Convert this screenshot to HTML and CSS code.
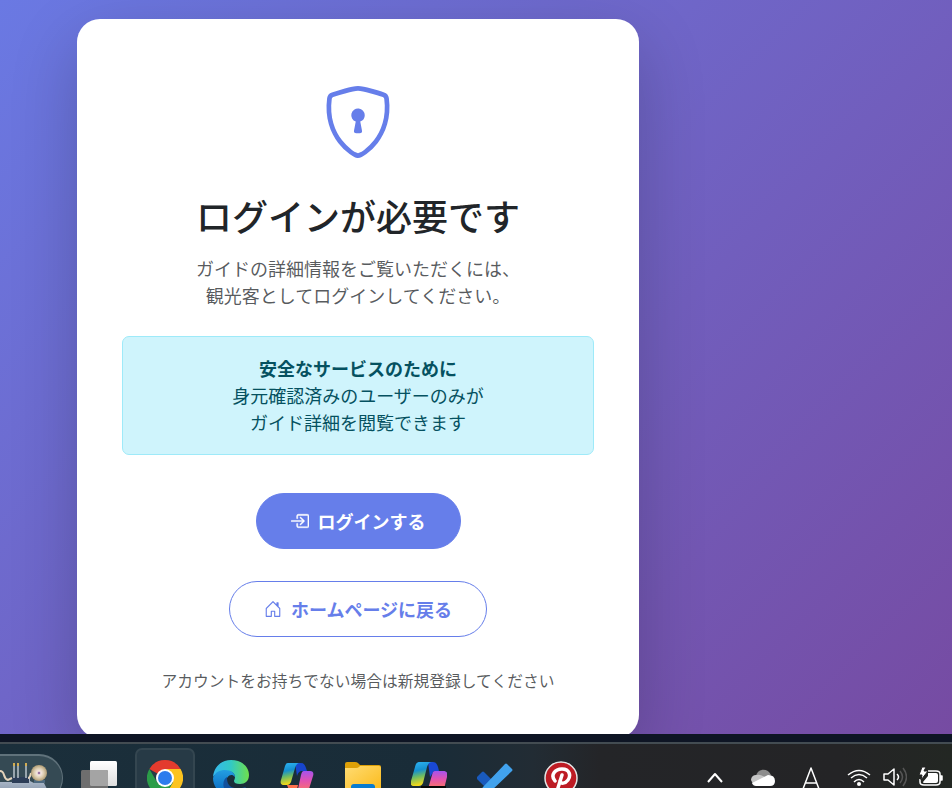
FILE: index.html
```html
<!DOCTYPE html>
<html lang="ja">
<head>
<meta charset="utf-8">
<meta name="viewport" content="width=device-width, initial-scale=1">
<title>ログインが必要です</title>
<link rel="stylesheet" href="styles.css">
</head>
<body>
<main class="stage">
  <section class="card">
    <svg class="shield" viewBox="0 0 16 16" fill="currentColor" aria-hidden="true">
      <path d="M5.338 1.59a61 61 0 0 0-2.837.856.48.48 0 0 0-.328.39c-.554 4.157.726 7.19 2.253 9.188a10.7 10.7 0 0 0 2.287 2.233c.346.244.652.42.893.533q.18.085.293.118a1 1 0 0 0 .101.025 1 1 0 0 0 .1-.025q.114-.034.294-.118c.24-.113.547-.29.893-.533a10.7 10.7 0 0 0 2.287-2.233c1.527-1.997 2.807-5.031 2.253-9.188a.48.48 0 0 0-.328-.39c-.651-.213-1.75-.56-2.837-.855C9.552 1.29 8.531 1.067 8 1.067c-.53 0-1.552.223-2.662.524zM5.072.56C6.157.265 7.31 0 8 0s1.843.265 2.928.56c1.11.3 2.229.655 2.887.87a1.54 1.54 0 0 1 1.044 1.262c.596 4.477-.787 7.795-2.465 9.99a11.8 11.8 0 0 1-2.517 2.453 7 7 0 0 1-1.048.625c-.28.132-.581.24-.829.24s-.548-.108-.829-.24a7 7 0 0 1-1.048-.625 11.8 11.8 0 0 1-2.517-2.453C1.928 10.487.545 7.169 1.141 2.692A1.54 1.54 0 0 1 2.185 1.43 63 63 0 0 1 5.072.56"/>
      <path d="M9.5 6.5a1.5 1.5 0 0 1-1 1.415l.385 1.99a.5.5 0 0 1-.491.595h-.788a.5.5 0 0 1-.49-.595l.384-1.99a1.5 1.5 0 1 1 2-1.415"/>
    </svg>
    <h1 class="title">ログインが必要です</h1>
    <p class="lead">ガイドの詳細情報をご覧いただくには、<br>観光客としてログインしてください。</p>
    <div class="notice"><strong>安全なサービスのために</strong><br>身元確認済みのユーザーのみが<br>ガイド詳細を閲覧できます</div>
    <div class="actions">
      <button class="btn btn-primary" type="button">
        <svg class="btn-icon" viewBox="0 0 16 16" fill="currentColor" aria-hidden="true">
          <path fill-rule="evenodd" d="M6 3.5a.5.5 0 0 1 .5-.5h8a.5.5 0 0 1 .5.5v9a.5.5 0 0 1-.5.5h-8a.5.5 0 0 1-.5-.5v-2a.5.5 0 0 0-1 0v2A1.5 1.5 0 0 0 6.5 14h8a1.5 1.5 0 0 0 1.5-1.5v-9A1.5 1.5 0 0 0 14.5 2h-8A1.5 1.5 0 0 0 5 3.5v2a.5.5 0 0 0 1 0z"/>
          <path fill-rule="evenodd" d="M11.854 8.354a.5.5 0 0 0 0-.708l-3-3a.5.5 0 1 0-.708.708L10.293 7.5H.5a.5.5 0 0 0 0 1h9.793l-2.147 2.146a.5.5 0 0 0 .708.708z"/>
        </svg>ログインする
      </button>
      <a class="btn btn-outline" href="#home">
        <svg class="btn-icon" viewBox="0 0 16 16" fill="currentColor" aria-hidden="true">
          <path d="M8.354 1.146a.5.5 0 0 0-.708 0l-6 6A.5.5 0 0 0 1.5 7.5v7a.5.5 0 0 0 .5.5h4.5a.5.5 0 0 0 .5-.5v-4h2v4a.5.5 0 0 0 .5.5H14a.5.5 0 0 0 .5-.5v-7a.5.5 0 0 0-.146-.354L13 5.793V2.5a.5.5 0 0 0-.5-.5h-1a.5.5 0 0 0-.5.5v1.293zM2.5 14V7.707l5.5-5.5 5.5 5.5V14H10v-4a.5.5 0 0 0-.5-.5h-3a.5.5 0 0 0-.5.5v4z"/>
        </svg>ホームページに戻る
      </a>
    </div>
    <p class="signup">アカウントをお持ちでない場合は新規登録してください</p>
  </section>
</main>

<footer class="taskbar">
  <button class="search" type="button" aria-label="検索">
    <svg viewBox="0 0 63 48" aria-hidden="true">
      <defs>
        <linearGradient id="body" x2="0" y2="1"><stop stop-color="#b4c0d0"/><stop offset="1" stop-color="#66788f"/></linearGradient>
        <radialGradient id="dish"><stop stop-color="#c8a8c8"/><stop offset=".3" stop-color="#f0e4da"/><stop offset=".6" stop-color="#dccdb0"/><stop offset="1" stop-color="#b09c74"/></radialGradient>
      </defs>
      <path d="M0 26h12v-4h18v3l4 2h10l5 10v11H0z" fill="url(#body)"/>
      <path d="M12 21h17v6H12z" fill="#2c3d57"/>
      <path d="M34 24h11v3H34z" fill="#4e6a80"/>
      <path d="M14 8v14M18 8v14M26 8v14" stroke="#bac4cb" stroke-width="1.5"/>
      <path d="M13 7h2v3h-2zM17 7h2v3h-2zM25 7h2v3h-2z" fill="#d3ad52"/>
      <path d="M0 15q3 0 4 4t4 5l4-2M28 22q2 0 3-5" fill="none" stroke="#e4d3ba" stroke-width="2"/>
      <circle cx="39" cy="17" r="8" fill="url(#dish)"/>
      <circle cx="39" cy="17" r="1" fill="#8a5f94"/>
    </svg>
  </button>
  <nav class="apps" aria-label="アプリ">
    <button class="app" type="button" aria-label="タスク ビュー">
      <svg viewBox="0 0 36 36"><defs><linearGradient id="tv" x2="0" y2="1"><stop stop-color="#fff"/><stop offset="1" stop-color="#dedede"/></linearGradient></defs>
        <rect x="9" y="1" width="27" height="25" rx="1.5" fill="url(#tv)"/><rect y="10" width="27" height="24" rx="1.5" fill="#6e6e6e"/><path d="M9 10h16.5a1.5 1.5 0 0 1 1.5 1.5V26H10.5a1.5 1.5 0 0 1-1.5-1.5z" fill="#a4a4a4"/></svg>
    </button>
    <button class="app app-active" type="button" aria-label="Chrome">
      <svg viewBox="0 0 36 36"><path d="M18 18 2.41 9A18 18 0 0 1 33.59 9z" fill="#e33b2e"/><path d="M18 9h15.59A18 18 0 0 1 18 36l7.79-13.5z" fill="#fcc31e"/><path d="M10.21 22.5 2.41 9A18 18 0 0 0 18 36l7.79-13.5z" fill="#2b9c48"/><circle cx="18" cy="18" r="9" fill="#fff"/><circle cx="18" cy="18" r="7" fill="#2d7ced"/></svg>
    </button>
    <button class="app" type="button" aria-label="Edge">
      <svg viewBox="0 0 36 36"><defs><linearGradient id="eg"><stop stop-color="#35b8ee"/><stop offset=".5" stop-color="#32c9c4"/><stop offset="1" stop-color="#6fe04b"/></linearGradient><linearGradient id="eb" x2="0" y2="1"><stop stop-color="#239ee2"/><stop offset="1" stop-color="#0865bd"/></linearGradient></defs>
        <path d="M0 17C1 6 9 0 18 0c11 0 18 7 18 15 0 6-4 9-9 9-4 0-6-1-6-3 0-1 1-2 1-4 0-4-4-6-8-6-6 0-11 2-14 6z" fill="url(#eg)"/><path d="M0 18C2 12 7 10 12 10c6 0 10 3 10 7-4-5-9 0-9 5 0 6 6 9 13 7-3 4-5 5-8 5C8 36 0 28 0 18z" fill="url(#eb)"/><path d="M14 17c-5 3-5 12 1 16 6 3 14 0 18-6-6 2-14 2-17-2-2-3-2-5-2-8z" fill="#12519d"/></svg>
    </button>
    <button class="app" type="button" aria-label="Copilot">
      <svg viewBox="0 0 36 36"><defs><linearGradient id="ca" x2=".2" y2="1"><stop stop-color="#2fb5f5"/><stop offset=".4" stop-color="#1590cf"/><stop offset=".65" stop-color="#6dbb64"/><stop offset="1" stop-color="#f4d918"/></linearGradient><linearGradient id="cb" x2="0" y2="1"><stop stop-color="#a553ee"/><stop offset=".45" stop-color="#e252b0"/><stop offset="1" stop-color="#ff795d"/></linearGradient></defs>
        <path d="M16 3h6c3 0 4 2 5 5l1 3h-4c-4 0-5 2-6 5z" fill="#1745cd"/><path d="M9 3h12c-3 0-4 2-5 5l-4 14c-1 2-2 3-4 3H5c-3 0-4-2-3-5L6 6c1-2 1-3 3-3z" fill="url(#ca)"/><path d="M25 11h6c3 0 4 2 3 5l-4 13c-1 3-3 4-5 4H14c3 0 4-1 5-4l3-14c1-3 1-4 3-4z" fill="url(#cb)"/><path d="M8 25h11l-2 8h-3c-3 0-4-3-6-8z" fill="#ff704c"/></svg>
    </button>
    <button class="app" type="button" aria-label="エクスプローラー">
      <svg viewBox="0 0 36 36"><defs><linearGradient id="fd" x2="1" y2="1"><stop stop-color="#ffdc73"/><stop offset="1" stop-color="#fbb917"/></linearGradient></defs>
        <path d="M0 4q0-2 2-2h8q2 0 3 1l2 2h19q2 0 2 2v4H0z" fill="#dda007"/><path d="M0 8h11q2 0 3-1l1-1h19q2 0 2 2v24H0z" fill="url(#fd)"/><path d="M6 36V27q0-3 3-3h18q3 0 3 3v9z" fill="#087bd0"/></svg>
    </button>
    <button class="app" type="button" aria-label="Microsoft 365">
      <svg viewBox="0 0 36 36"><path d="M17 2h5c3 0 4 2 5 5l1 4h-5l-4 6z" fill="#1948d4"/><path d="M9 2h12c-3 0-4 2-5 5l-4 16c-1 2-2 3-4 3H3c-3 0-4-2-3-5L4 7c1-4 2-5 5-5z" fill="url(#ca)"/><path d="M24 11h8c4 0 5 2 4 6l-3 12H17l4-14c1-3 1-4 3-4z" fill="url(#cb)"/><rect x="10" y="26" width="25" height="10" fill="#080808"/><text class="m-label" x="12" y="34">M365</text></svg>
    </button>
    <button class="app" type="button" aria-label="To Do">
      <svg viewBox="0 0 36 36"><path d="m0 17 5-5q1-1 2 0l11 11-7 7L0 19q-1-1 0-2z" fill="#195abd"/><path d="M28 4q1-1 2 0l5 5q1 1 0 2L12 33q-1 1-2 0l-4-4q-1-1 0-2z" fill="#41a2ed"/></svg>
    </button>
    <button class="app" type="button" aria-label="Pinterest">
      <svg viewBox="0 0 36 36"><circle cx="18" cy="18" r="16" fill="#bd1c24" stroke="#e5e5e5" stroke-width="1.5"/><path d="m14 31 5-16M12 21c-5-6 0-12 7-12 8 0 9 7 6 11-3 4-7 4-8 1" fill="none" stroke="#fff" stroke-width="3.5" stroke-linecap="round"/></svg>
    </button>
  </nav>
  <div class="tray">
    <button class="status wide" type="button" aria-label="隠れているインジケーター"><svg viewBox="0 0 24 24"><path d="m5 16 7-8 7 8"/></svg></button>
    <button class="status wide" type="button" aria-label="OneDrive"><svg viewBox="0 0 24 24"><g stroke="none"><path d="M5 10C7 2 17 2 20 9l-7 6z" fill="#8d8d8d"/><path d="M0 14a5 5 0 0 1 6-5q5-1 12 5L2 18z" fill="#c5c5c5"/><path d="M1 17 17 9q7 0 7 6 0 5-5 5H5q-3 0-4-3z" fill="#fff"/></g></svg></button>
    <button class="status wide" type="button" aria-label="入力モード"><svg viewBox="0 0 24 24"><path d="M4 23 12 2l8 21M6 17h12" stroke-width="1.5"/></svg></button>
    <button class="status first" type="button" aria-label="Wi-Fi"><svg viewBox="0 0 24 24"><path d="M1 9q11-9 22 0M4 12q8-7 16 0M7 16q5-5 10 0" stroke-width="1.5"/><circle cx="12" cy="18" r="2" fill="#fff" stroke="none"/></svg></button>
    <button class="status" type="button" aria-label="音量"><svg viewBox="0 0 24 24"><g stroke-width="1.5"><path d="M1 8h4l6-5v16l-6-5H1zM14 8q3 3 0 6"/><path d="M17 5q5 6 0 12M20 2q7 9 0 18" stroke="#555"/></g></svg></button>
    <button class="status" type="button" aria-label="バッテリー"><svg viewBox="0 0 24 24"><path d="M9 5h8q4 0 4 3v8q0 3-4 3H5q-4 0-4-3v-3M22 10v4h1v-4z" stroke-width="1.5"/><path d="M9 7h8q2 0 2 2v6q0 2-2 2H5q-1 0-1-1l5-6z" fill="#fff" stroke="none"/><path d="M3 1 0 9h3l-1 5 7-9H5l2-4z" fill="#fff" stroke="#222" stroke-width="1"/></svg></button>
  </div>
</footer>
</body>
</html>
```

FILE: styles.css
```css
* { box-sizing: border-box; }

html { font-size: 18px; }

body {
  margin: 0;
  height: 100vh;
  display: flex;
  flex-direction: column;
  overflow: hidden;
  font-family: "Noto Sans CJK JP", sans-serif;
  line-height: 1.5;
  color: #212529;
}

button { font: inherit; }
svg { display: block; }

.stage {
  flex: 1;
  min-height: 0;
  overflow: hidden;
  padding: 19px 313px 0 77px;
  background: linear-gradient(135deg, #6a79e3 0%, #764ba2 100%);
}

.card {
  padding: 67px 45px 45px;
  border-radius: 23px;
  background: #fff;
  box-shadow: 0 23px 68px rgba(0, 0, 0, 0.2);
  text-align: center;
}

.shield {
  width: 72px;
  height: 72px;
  margin: 0 auto 35px;
  color: #667eea;
}

.title {
  margin: 0 0 18px;
  font-size: 36px;
  font-weight: 500;
  line-height: 44px;
}

.lead {
  margin: 0 0 27px;
  color: rgba(33, 37, 41, 0.75);
}

.notice {
  margin-bottom: 38px;
  padding: 18px;
  border: 1px solid #9eeaf9;
  border-radius: 7px;
  background: #cff4fc;
  color: #055160;
}

.actions {
  display: flex;
  flex-direction: column;
  align-items: center;
  gap: 32px;
}

.btn {
  display: flex;
  align-items: center;
  gap: 9px;
  padding: 13px 34px;
  border: 1px solid #667eea;
  border-radius: 56px;
  font-weight: 700;
  line-height: 28px;
  text-decoration: none;
}

.btn-icon { width: 18px; height: 18px; }
.btn-primary { background: #667eea; color: #fff; }
.btn-primary .btn-icon { stroke: currentColor; stroke-width: 0.4; }
.btn-outline { background: #fff; color: #667eea; }

.signup {
  margin: 32px 0 0;
  font-size: 0.875rem;
  color: rgba(33, 37, 41, 0.75);
}

.taskbar {
  flex: none;
  height: 54px;
  display: flex;
  align-items: flex-start;
  overflow: hidden;
  border-top: 8px solid #0e1524;
  background: linear-gradient(90deg, #1b2f3b 0%, #192c38 45%, #222c34 56%, #242528 63%, #242426 88%, #232723 100%);
  box-shadow: inset 0 2px #434c52;
}

.taskbar button {
  padding: 0;
  border: 0;
  background: none;
}

.taskbar .search {
  width: 63px;
  height: 48px;
  margin: 12px 3px 0 0;
  overflow: hidden;
  border: 1px solid #60727b;
  border-left: 0;
  border-top-width: 2px;
  border-radius: 0 24px 24px 0;
  background: #354a54;
}

.search svg { width: 63px; height: 48px; }

.apps, .tray { display: flex; padding-top: 6px; }

.app {
  width: 60px;
  height: 60px;
  margin: 0 3px;
  border-radius: 7px;
}

.taskbar .app-active {
  border: 2px solid #344650;
  background: #273a46;
}

.app svg { width: 36px; height: 36px; margin: 0 auto; }

.m-label {
  fill: #fff;
  font: 700 9px "Liberation Sans", sans-serif;
}

.tray { margin-left: auto; padding-right: 3px; }
.status { width: 36px; height: 60px; }
.status.wide { width: 48px; }
.status.first { margin-left: 6px; }

.status svg {
  width: 24px;
  height: 24px;
  margin: 0 auto;
  fill: none;
  stroke: #fff;
  stroke-width: 2;
  stroke-linejoin: round;
}
```
